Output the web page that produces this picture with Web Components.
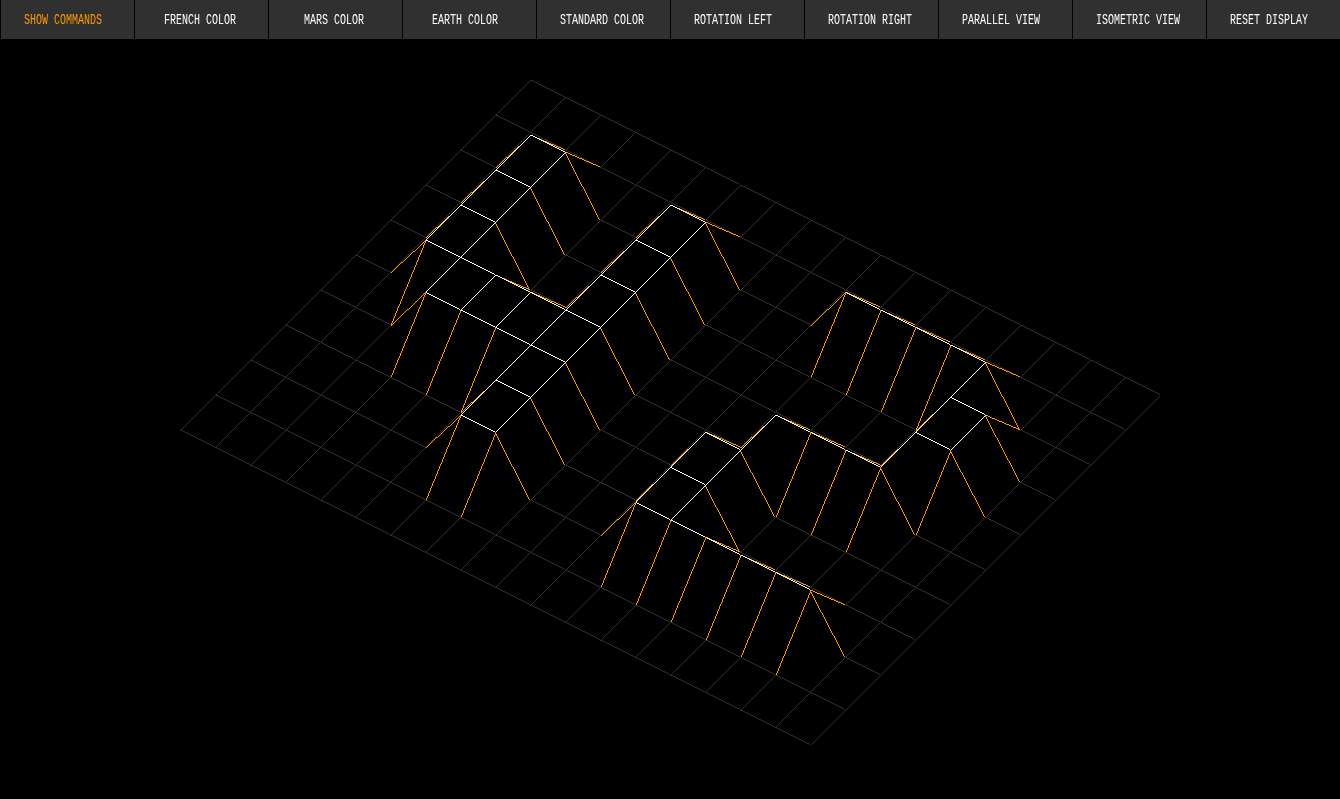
<!DOCTYPE html>
<html lang="en"><head><meta charset="utf-8"><title>FdF</title>
<style>html,body{margin:0;height:100%;background:#000;overflow:hidden}</style></head>
<body><fdf-app></fdf-app>
<script>
class FdfButton extends HTMLElement{
  constructor(){super();this.attachShadow({mode:'open'}).innerHTML=`<style>
  :host{display:block;box-sizing:border-box;height:39px;background:#303030;color:#fff;padding:14px 0 0 var(--pad,24px);cursor:pointer}
  :host([active]){color:#ff9900}
  span{display:block;width:max-content;font:10px/14px "Liberation Mono",monospace;white-space:pre;transform:scaleY(1.42);transform-origin:0 50%;will-change:transform}
  </style><span><slot></slot></span>`;}
}
customElements.define('fdf-button',FdfButton);

class FdfToolbar extends HTMLElement{
  constructor(){super();this.attachShadow({mode:'open'}).innerHTML=`<style>
  :host{display:grid;grid-template-columns:repeat(10,133px);column-gap:1px;padding-left:1px;height:39px;background:#000}
  </style><slot></slot>`;}
}
customElements.define('fdf-toolbar',FdfToolbar);

class FdfMap extends HTMLElement{
  constructor(){super();this.attachShadow({mode:'open'}).innerHTML=`<style>
  :host{display:block}canvas{display:block}
  </style><canvas width="1340" height="760"></canvas>`;}
  connectedCallback(){
    const map=['0000000000000000000','0000000000000000000','0011001100011111000','0011001100000001100','0011001100000001100','0011111100001111000','0001111100011000000','0000001100011000000','0000001100011111100','0000000000000000000','0000000000000000000'];
    const g=this.shadowRoot.querySelector('canvas').getContext('2d');
    const pt=(r,c)=>[530+35*(c-r),Math.floor(80+17.5*c+35*r-50*map[r][c])-39];
    // Integer line walk: the minor axis steps only once a whole pixel is covered.
    const line=(a,b,col)=>{
      g.fillStyle=col;
      const dx=b[0]-a[0],dy=b[1]-a[1],n=Math.max(Math.abs(dx),Math.abs(dy));
      for(let i=0;i<n;i++){
        const x=a[0]+Math.trunc(dx*i/n),y=a[1]+Math.trunc(dy*i/n);
        if(x<1160)g.fillRect(x,y,1,1);
      }
    };
    const cols=['#303030','#ff9900','#ffffff'];
    for(let r=0;r<11;r++)for(let c=0;c<19;c++){
      const h=+map[r][c],a=pt(r,c);
      if(c<18)line(a,pt(r,c+1),cols[h+ +map[r][c+1]]);
      if(r<10){
        const b=pt(r+1,c),col=cols[h+ +map[r+1][c]];
        if(b[1]<a[1])line(b,a,col);else line(a,b,col);
      }
    }
  }
}
customElements.define('fdf-map',FdfMap);

class FdfApp extends HTMLElement{
  constructor(){super();this.attachShadow({mode:'open'}).innerHTML=`<style>
  :host{display:flex;flex-direction:column;width:1340px;height:799px;background:#000}
  </style><fdf-toolbar>
  <fdf-button active style="--pad:23px">SHOW COMMANDS</fdf-button>
  <fdf-button style="--pad:29px">FRENCH COLOR</fdf-button>
  <fdf-button style="--pad:35px">MARS COLOR</fdf-button>
  <fdf-button style="--pad:29px">EARTH COLOR</fdf-button>
  <fdf-button style="--pad:23px">STANDARD COLOR</fdf-button>
  <fdf-button style="--pad:23px">ROTATION LEFT</fdf-button>
  <fdf-button style="--pad:23px">ROTATION RIGHT</fdf-button>
  <fdf-button style="--pad:23px">PARALLEL VIEW</fdf-button>
  <fdf-button style="--pad:23px">ISOMETRIC VIEW</fdf-button>
  <fdf-button style="--pad:23px">RESET DISPLAY</fdf-button>
  </fdf-toolbar><fdf-map></fdf-map>`;}
}
customElements.define('fdf-app',FdfApp);
</script></body></html>
